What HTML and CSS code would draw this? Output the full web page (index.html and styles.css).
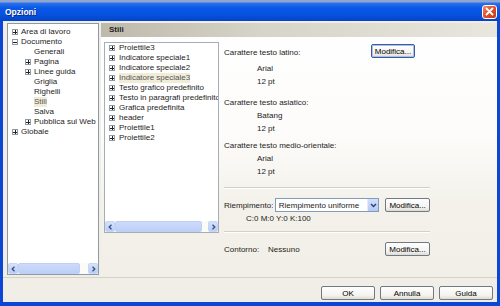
FILE: index.html
```html
<!DOCTYPE html>
<html lang="it">
<head>
    <meta charset="UTF-8">
    <meta name="viewport" content="width=device-width, initial-scale=1.0">
    <title>Opzioni</title>
    <link rel="stylesheet" href="styles.css">
</head>
<body>
    <div class="window">
        <div class="titlebar">
            <span class="title">Opzioni</span>
            <span class="close">
                <svg width="9" height="9" viewBox="0 0 9 9"><path d="M1.5 1.5L7.5 7.5M7.5 1.5L1.5 7.5" stroke="#fff" stroke-width="1.8" stroke-linecap="round"/></svg>
            </span>
        </div>

        <div class="body">
            <div class="main">
                <!-- albero categorie -->
                <div class="tree">
                    <ul class="items">
                        <li><span class="pm plus"></span>Area di lavoro</li>
                        <li><span class="pm minus"></span>Documento</li>
                        <li class="sub"><span class="pm none"></span>Generali</li>
                        <li class="sub"><span class="pm plus"></span>Pagina</li>
                        <li class="sub"><span class="pm plus"></span>Linee guida</li>
                        <li class="sub"><span class="pm none"></span>Griglia</li>
                        <li class="sub"><span class="pm none"></span>Righelli</li>
                        <li class="sub"><span class="pm none"></span><span class="sel">Stili</span></li>
                        <li class="sub"><span class="pm none"></span>Salva</li>
                        <li class="sub"><span class="pm plus"></span>Pubblica sul Web</li>
                        <li><span class="pm plus"></span>Globale</li>
                    </ul>
                    <div class="hscroll tree-scroll">
                        <span class="arrow left"><svg width="5" height="6" viewBox="0 0 5 6"><path d="M3.5 0.8L1.2 3L3.5 5.2" fill="none" stroke="#3b4d7a" stroke-width="1.3"/></svg></span>
                        <span class="thumb"></span>
                        <span class="track"></span>
                        <span class="arrow right"><svg width="5" height="6" viewBox="0 0 5 6"><path d="M1.5 0.8L3.8 3L1.5 5.2" fill="none" stroke="#3b4d7a" stroke-width="1.3"/></svg></span>
                    </div>
                </div>

                <div class="pane">
                    <div class="pane-head">Stili</div>
                    <div class="pane-body">
                        <div class="list">
                            <ul class="items">
                                <li><span class="pm plus"></span>Proiettile3</li>
                                <li><span class="pm plus"></span>Indicatore speciale1</li>
                                <li><span class="pm plus"></span>Indicatore speciale2</li>
                                <li><span class="pm plus"></span><span class="sel">Indicatore speciale3</span></li>
                                <li><span class="pm plus"></span>Testo grafico predefinito</li>
                                <li><span class="pm plus"></span>Testo in paragrafi predefinito</li>
                                <li><span class="pm plus"></span>Grafica predefinita</li>
                                <li><span class="pm plus"></span>header</li>
                                <li><span class="pm plus"></span>Proiettile1</li>
                                <li><span class="pm plus"></span>Proiettile2</li>
                            </ul>
                            <div class="hscroll list-scroll">
                                <span class="arrow left"><svg width="5" height="6" viewBox="0 0 5 6"><path d="M3.5 0.8L1.2 3L3.5 5.2" fill="none" stroke="#3b4d7a" stroke-width="1.3"/></svg></span>
                                <span class="thumb"></span>
                                <span class="track"></span>
                                <span class="arrow right"><svg width="5" height="6" viewBox="0 0 5 6"><path d="M1.5 0.8L3.8 3L1.5 5.2" fill="none" stroke="#3b4d7a" stroke-width="1.3"/></svg></span>
                            </div>
                        </div>

                        <div class="props">
                            <div class="row first">
                                <span class="label">Carattere testo latino:</span>
                                <button class="btn default">Modifica...</button>
                            </div>
                            <div class="val">Arial</div>
                            <div class="val">12 pt</div>

                            <div class="label gap">Carattere testo asiatico:</div>
                            <div class="val">Batang</div>
                            <div class="val">12 pt</div>

                            <div class="label gap2">Carattere testo medio-orientale:</div>
                            <div class="val">Arial</div>
                            <div class="val">12 pt</div>

                            <div class="sep"></div>

                            <div class="row fill">
                                <span class="label">Riempimento:</span>
                                <span class="select">
                                    <span class="select-text">Riempimento uniforme</span>
                                    <span class="select-btn"><svg width="7" height="5" viewBox="0 0 7 5"><path d="M1 1L3.5 3.6L6 1" fill="none" stroke="#2d3f72" stroke-width="1.4"/></svg></span>
                                </span>
                                <button class="btn">Modifica...</button>
                            </div>
                            <div class="cmyk">C:0 M:0 Y:0 K:100</div>

                            <div class="sep short"></div>

                            <div class="row outline">
                                <span class="label">Contorno:</span>
                                <span class="none-val">Nessuno</span>
                                <button class="btn">Modifica...</button>
                            </div>
                        </div>
                    </div>
                </div>
            </div>

            <div class="footer">
                <button class="btn big">OK</button>
                <button class="btn big">Annulla</button>
                <button class="btn big">Guida</button>
            </div>
        </div>
    </div>
</body>
</html>
```

FILE: styles.css
```css
* {
    box-sizing: border-box;
}

body {
    margin: 0;
    background: #3a6ea5;
    font-family: "Liberation Sans", Arial, sans-serif;
    font-size: 8px;
    color: #1c1c1c;
}

.window {
    width: 500px;
    height: 306px;
    display: flex;
    flex-direction: column;
    background: #0b47d4;
}

/* barra del titolo */
.titlebar {
    height: 21px;
    display: flex;
    align-items: center;
    justify-content: space-between;
    padding: 2px 3px 0 5px;
    background: linear-gradient(#8fa6cf 0, #8fa6cf 2px, #2d72ee 3px, #0a58e8 8px, #0651de 15px, #0444c6 21px);
}

.title {
    color: #fff;
    font-weight: bold;
    font-size: 8.5px;
    text-shadow: 1px 1px 0 #0a2a88;
}

.close {
    width: 15px;
    height: 14px;
    border: 1px solid #fff;
    border-radius: 3px;
    background: linear-gradient(135deg, #f08a6c, #e2512b 45%, #c43a14);
    display: flex;
    align-items: center;
    justify-content: center;
}

.body {
    flex: 1;
    margin: 0 3px 4px 3px;
    background: #f0eee6;
    display: flex;
    flex-direction: column;
}

.main {
    height: 256px;
    display: flex;
    padding: 2px 0 0 4px;
}

.items {
    list-style: none;
    margin: 0;
    padding: 0;
}

.items li {
    height: 10px;
    line-height: 10px;
    white-space: nowrap;
    display: flex;
    align-items: center;
}

.pm {
    width: 6px;
    height: 6px;
    flex: none;
    border: 1px solid #8e9aa6;
    background-color: #fff;
    margin-right: 3px;
}

.pm.plus {
    background-image: linear-gradient(#222, #222), linear-gradient(#222, #222);
    background-size: 4px 1px, 1px 4px;
    background-position: center, center;
    background-repeat: no-repeat;
}

.pm.minus {
    background-image: linear-gradient(#222, #222);
    background-size: 4px 1px;
    background-position: center;
    background-repeat: no-repeat;
}

.pm.none {
    border-color: transparent;
    background: none;
}

.sel {
    background: #f0ecd8;
    color: #555;
}

/* albero */
.tree {
    width: 92px;
    height: 252px;
    border: 1px solid #8c9aa8;
    background: #fff;
    display: flex;
    flex-direction: column;
    justify-content: space-between;
}

.tree .items {
    padding: 3px 0 0 4px;
}

.tree .items li.sub {
    padding-left: 13px;
}

.hscroll {
    height: 11px;
    display: flex;
    background: #fbfbf8;
}

.hscroll .arrow {
    width: 10px;
    height: 11px;
    display: flex;
    align-items: center;
    justify-content: center;
    background: linear-gradient(#d6e2fc, #b9cdf6);
    border: 1px solid #c8d6f4;
    border-radius: 2px;
}

.hscroll .thumb {
    background: linear-gradient(#cddbfb, #bccff7);
    border: 1px solid #c0d0f2;
    border-radius: 2px;
}

.hscroll .track {
    flex: 1;
}

.tree-scroll .thumb {
    width: 62px;
}

.list-scroll .thumb {
    width: 87px;
}

/* pannello destro */
.pane {
    flex: 1;
    margin-left: 2px;
    display: flex;
    flex-direction: column;
}

.pane-head {
    height: 14px;
    line-height: 14px;
    padding-left: 8px;
    font-weight: bold;
    background: linear-gradient(90deg, #bdb9ab, #d6d3c8 40%, #e9e6de);
}

.pane-body {
    flex: 1;
    display: flex;
    padding: 5px 0 0 3px;
    background: linear-gradient(#fefefe, #fdfcfa 40%, #f3f1ea 70%, #f1efe7);
}

.list {
    width: 115px;
    height: 191px;
    border: 1px solid #a5aeb8;
    background: #fff;
    display: flex;
    flex-direction: column;
    justify-content: space-between;
    overflow: hidden;
}

.list .items {
    padding: 0 0 0 4px;
}

.list .items .pm {
    margin-right: 4px;
}

.props {
    width: 206px;
    margin: 2px 0 0 5px;
}

.row {
    height: 14px;
    display: flex;
    align-items: center;
}

.row.first .label {
    width: 147px;
    padding-top: 3px;
}

.val {
    height: 13px;
    line-height: 13px;
    padding-left: 33px;
}

.row.first + .val {
    margin-top: 4px;
}

.label.gap {
    height: 13px;
    line-height: 13px;
    margin-top: 8px;
}

.label.gap2 {
    height: 13px;
    line-height: 13px;
    margin-top: 4px;
}

.sep {
    height: 2px;
    border-top: 1px solid #d3d0c6;
    border-bottom: 1px solid #fff;
    margin-top: 9px;
}

.sep.short {
    margin-top: 6px;
}

.row.fill {
    margin-top: 9px;
}

.row.fill .label {
    width: 51px;
}

.select {
    width: 105px;
    height: 14px;
    border: 1px solid #7f9db9;
    background: #fff;
    display: flex;
    align-items: center;
    justify-content: space-between;
    padding-left: 3px;
}

.select-btn {
    width: 11px;
    height: 12px;
    display: flex;
    align-items: center;
    justify-content: center;
    background: linear-gradient(#d3e0fc, #b5c9f5);
    border-left: 1px solid #e4ebfb;
}

.row.fill .btn {
    margin-left: 6px;
}

.cmyk {
    height: 13px;
    line-height: 13px;
    padding-left: 22px;
}

.sep + .row.outline {
    margin-top: 9px;
}

.row.outline .label {
    width: 44px;
}

.none-val {
    flex: 1;
}

.btn {
    font-family: "Liberation Sans", Arial, sans-serif;
    font-size: 8px;
    color: #000;
    width: 45px;
    height: 14px;
    padding: 0;
    border: 1px solid #6f7a84;
    border-radius: 2px;
    background: linear-gradient(#fefefe, #f4f3ee 70%, #dedbd1);
}

.btn.default {
    width: 44px;
    border: 1px solid #3b5aa0;
    box-shadow: inset 0 0 0 1px #a9bfec;
}

/* pulsanti in basso */
.footer {
    flex: 1;
    border-top: 1px solid #d6d2c6;
    display: flex;
    justify-content: flex-end;
    align-items: flex-start;
    gap: 5px;
    padding: 8px 4px 0 0;
}

.btn.big {
    width: 54px;
}
```
